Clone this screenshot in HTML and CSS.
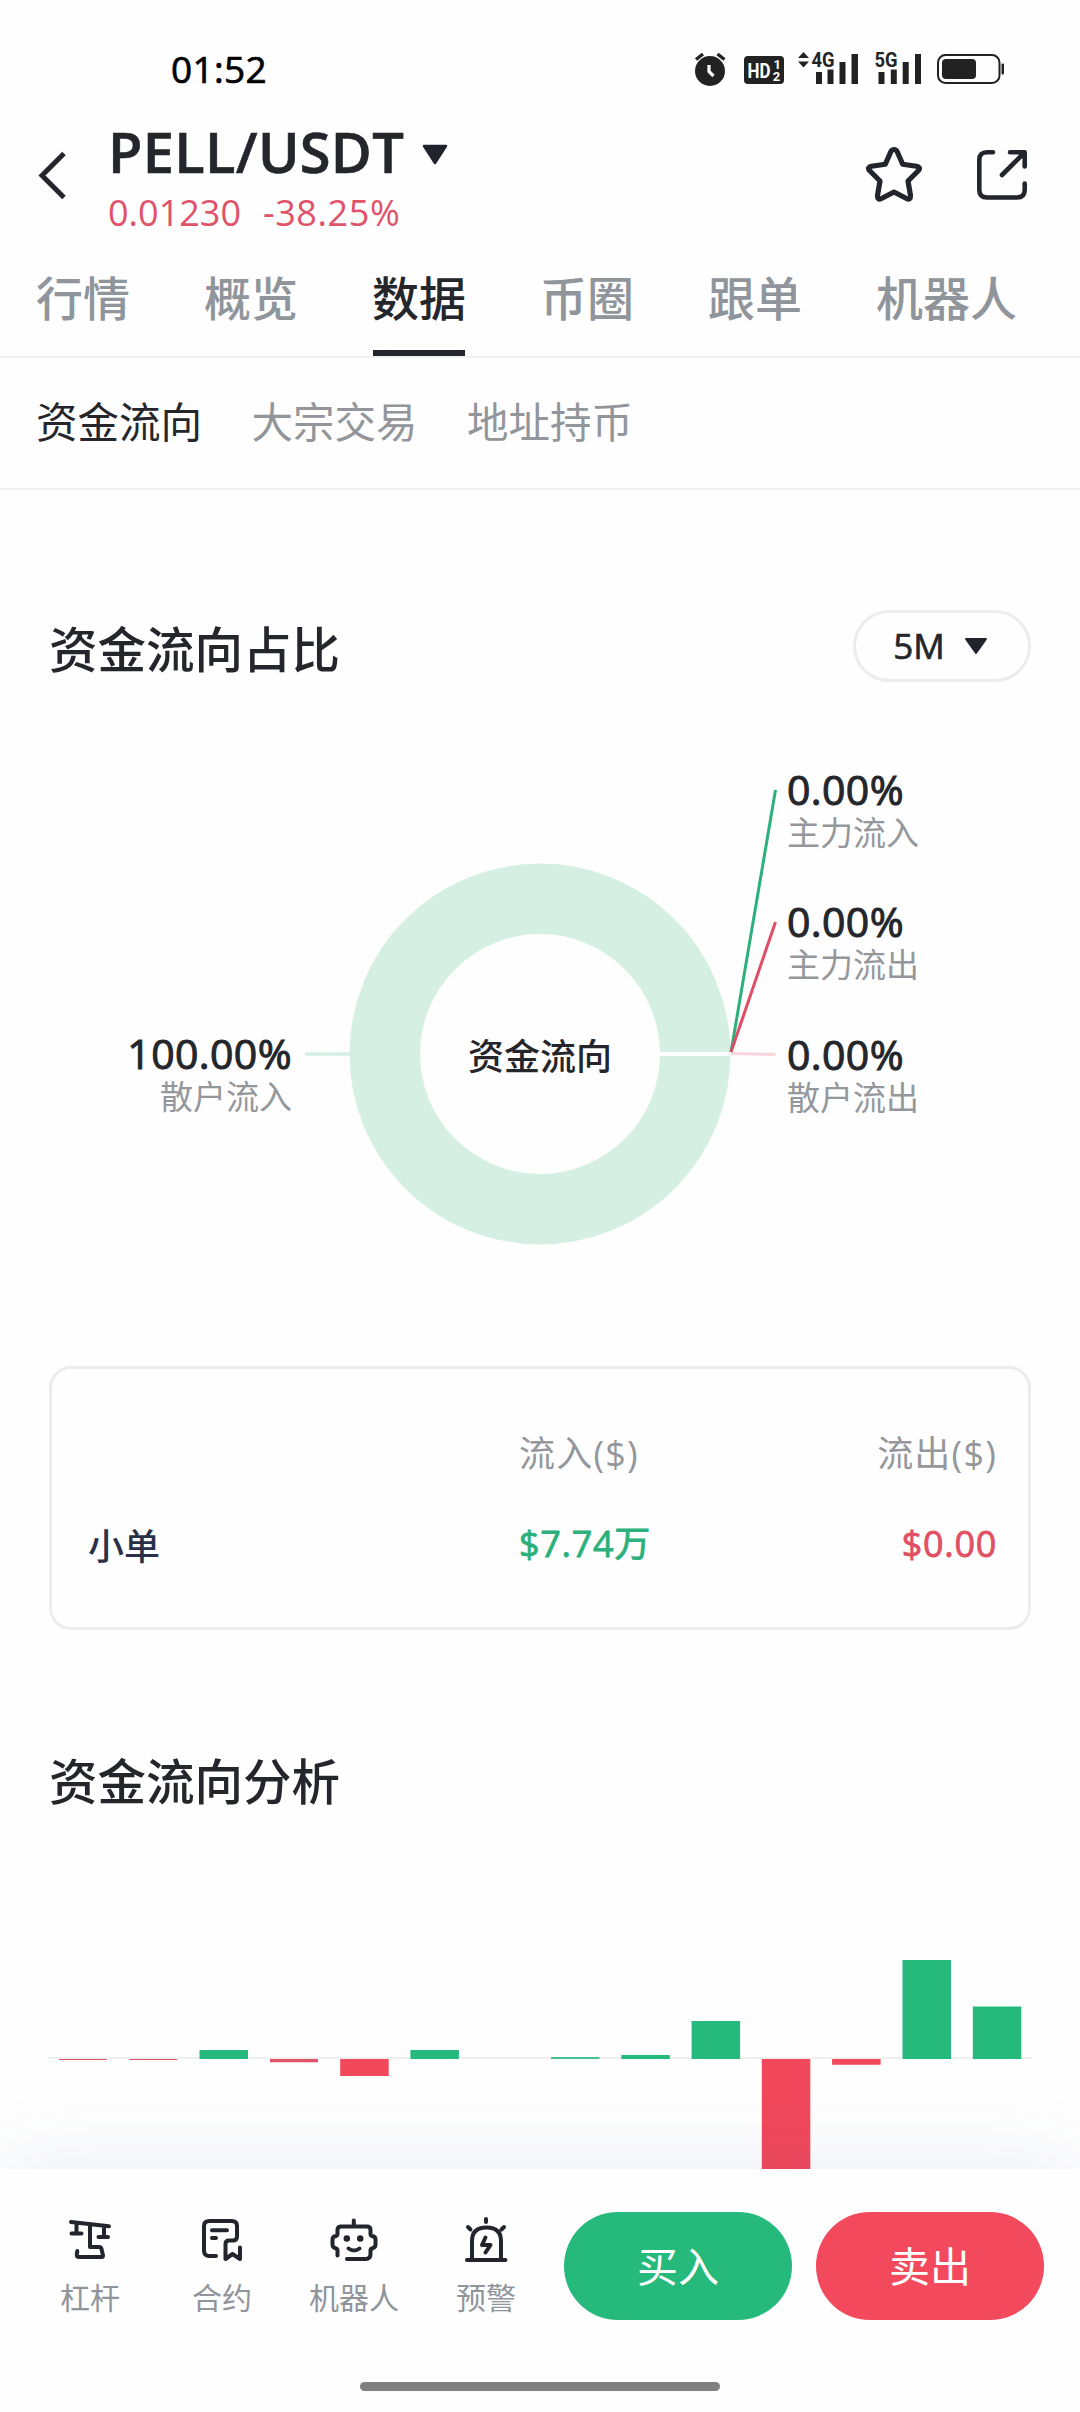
FILE: index.html
```html
<!DOCTYPE html>
<html lang="zh-CN">
<head>
<meta charset="utf-8">
<title>PELL/USDT</title>
<link rel="stylesheet" href="styles.css">
</head>
<body>
<div class="screen">
  <div class="status">
    <span class="clock">01:52</span>
    <svg class="status-icons" width="312" height="52" viewBox="694 43 312 52">
      <g fill="#222">
        <circle cx="710" cy="71" r="15"/>
        <path d="M696 59.500L703 54M724.500 59.500L717.500 54" stroke="#222" stroke-width="3.400" fill="none"/>
        <path d="M709 65v6.500l4.500 4.500" stroke="#fff" stroke-width="3.200" fill="none"/>
        <rect x="744" y="56" width="40" height="28" rx="4"/>
        <path d="M803.500 52l5.500 6h-11zM803.500 67.500l5.500-6h-11z"/>
        <path d="M816 72h6v12h-6zM827.500 69.500h6v14.500h-6zM839.500 62h6v22h-6zM851.500 54h6.500v30h-6.500z"/>
        <path d="M878.500 72h6v12h-6zM890.800 69.500h6v14.500h-6zM902.700 62h6v22h-6zM915 54h6v30h-6z"/>
        <rect x="942" y="59" width="34" height="20" rx="4"/>
        <rect x="1001.500" y="63.500" width="2.500" height="11" rx="1"/>
      </g>
      <rect x="938" y="55" width="61.500" height="28" rx="7.500" fill="none" stroke="#222" stroke-width="2"/>
      <text class="badge-hd" x="747.500" y="78" textLength="23" lengthAdjust="spacingAndGlyphs">HD</text>
      <text class="badge-num" x="773.500" y="69">1</text>
      <text class="badge-num" x="772.800" y="80.500">2</text>
      <text class="badge-net" x="811.500" y="67" textLength="23" lengthAdjust="spacingAndGlyphs">4G</text>
      <text class="badge-net" x="874.500" y="67" textLength="23" lengthAdjust="spacingAndGlyphs">5G</text>
    </svg>
  </div>

  <header class="header">
    <svg class="back" width="30" height="50" viewBox="0 0 30 50"><path d="M27 2.500L5 24.500 27 46.500" fill="none" stroke="#24262b" stroke-width="5"/></svg>
    <div class="pair">
      <div class="pair-name"><span>PELL/USDT</span><svg width="26" height="21" viewBox="0 0 26 21"><path d="M2 2h22L13 19z" fill="#20232c" stroke="#20232c" stroke-width="2.500" stroke-linejoin="round"/></svg></div>
      <div class="pair-price"><span>0.01230</span><span class="change">-38.25%</span></div>
    </div>
    <svg class="star" width="60" height="60" viewBox="0 0 60 60"><path d="M30 5.500q2.200 0 3.100 2L38.700 20.200 52.500 22.200Q57.500 23.500 54 27L44 37 46.500 51.500Q46.700 56.500 42.500 54.500L30 48 17.500 54.500Q13.300 56.500 13.500 51.500L16 37 6 27Q2.500 23.500 7.500 22.200L21.300 20.200 26.900 7.500q.9-2 3.100-2z" fill="none" stroke="#22252c" stroke-width="5.200" stroke-linejoin="round"/></svg>
    <svg class="share" width="54" height="54" viewBox="0 0 54 54"><g fill="none" stroke="#22252c" stroke-width="4.600" stroke-linecap="round" stroke-linejoin="round"><path d="M18 4.300H12Q4.300 4.300 4.300 12V42Q4.300 49.500 12 49.500H42Q49.700 49.500 49.700 42V35.500"/><path d="M35 4.300H49.700V18.500M48.500 5.500L27 27"/></g></svg>
  </header>

  <nav class="tabs">
    <span class="tab">行情</span><span class="tab">概览</span><span class="tab tab-active">数据</span><span class="tab">币圈</span><span class="tab">跟单</span><span class="tab">机器人</span>
  </nav>
  <nav class="subtabs">
    <span class="subtab subtab-active">资金流向</span><span class="subtab">大宗交易</span><span class="subtab">地址持币</span>
  </nav>

  <main class="content">
    <div class="section-head">
      <h2>资金流向占比</h2>
      <div class="period">5M<svg width="24" height="18" viewBox="0 0 24 18"><path d="M2 2h20L12 16z" fill="#20232c" stroke="#20232c" stroke-width="2" stroke-linejoin="round"/></svg></div>
    </div>

    <div class="flow">
      <div class="flow-left">
        <div class="share-item"><b>100.00%</b><span>散户流入</span></div>
      </div>
      <svg class="donut" width="473" height="500" viewBox="305 760 473 500">
        <circle cx="540" cy="1054" r="155.200" fill="none" stroke="#d5f0e2" stroke-width="70.500"/>
        <path d="M660 1054H731" stroke="#fff" stroke-width="4"/>
        <path d="M305 1054H350" stroke="#d5f0e2" stroke-width="3.500"/>
        <path d="M731 1053.500L775.500 1054.500" stroke="#fad5dc" stroke-width="3"/>
        <path d="M731 1052L775.500 790" stroke="#2db07d" stroke-width="3"/>
        <path d="M731 1052L775.500 922" stroke="#e04d66" stroke-width="3"/>
        <text class="donut-label" x="540" y="1070" text-anchor="middle">资金流向</text>
      </svg>
      <div class="flow-right">
        <div class="share-item"><b>0.00%</b><span>主力流入</span></div>
        <div class="share-item"><b>0.00%</b><span>主力流出</span></div>
        <div class="share-item"><b>0.00%</b><span>散户流出</span></div>
      </div>
    </div>

    <div class="card">
      <span></span><span class="th">流入($)</span><span class="th right">流出($)</span>
      <span class="row-name">小单</span><span class="up">$7.74万</span><span class="down right">$0.00</span>
    </div>

    <h2 class="analysis">资金流向分析</h2>
    <svg class="bars" width="984" height="358" viewBox="48 1811 984 358">
      <path d="M48 2058H1032" stroke="#f0f0f1" stroke-width="2"/>
      <g fill="#25ba7b">
        <path d="M199.500 2050h48.500v9h-48.500zM410.400 2050h48.500v9h-48.500zM621.300 2055h48.500v4h-48.500zM691.600 2021h48.500v38h-48.500zM902.500 1960h48.500v99h-48.500zM972.800 2006.500h48.500v52.500h-48.500z"/>
        <path d="M551 2057h48.500v2h-48.500z" opacity=".85"/>
      </g>
      <g fill="#e0526a">
        <path d="M59 2059h48v1h-48zM129.200 2059h48v1h-48z"/>
        <path d="M270 2059h48v3.300h-48z"/>
      </g>
      <path fill="#f1485b" d="M340.200 2059h48.500v17h-48.500zM761.800 2059h48.500v110h-48.500zM832.100 2059h48.500v5.700h-48.500z"/>
    </svg>
  </main>

  <footer class="bottom">
    <div class="actions">
      <div class="nav-item">
        <svg width="48" height="48" viewBox="66 2216 48 48"><path d="M71 2222L109 2226.200M76.500 2224V2233M71.500 2233.500H81.500M104 2227V2237M98.500 2237H108M90 2225V2247H99.500Q101 2247 101.500 2249L103 2255.500Q103 2257 101.500 2257H79Q76.500 2257 76.800 2254.500L77.300 2251"/></svg>
        <span>杠杆</span>
      </div>
      <div class="nav-item">
        <svg width="48" height="48" viewBox="198 2216 48 48"><path d="M216 2256H209.500Q204 2256 204 2250.500V2226Q204 2221 209.500 2221H231.500Q237 2221 237 2226V2236.500Q237 2240.500 233 2240.500H229Q225.500 2240.500 225.500 2244V2259L232.500 2254 240 2259V2247.500M212 2230.200H227M212 2238H216"/></svg>
        <span>合约</span>
      </div>
      <div class="nav-item">
        <svg width="48" height="48" viewBox="330 2216 48 48"><path d="M337.500 2255.500V2250.500Q337.500 2249 336 2248.500Q332.500 2247.500 332.500 2244.500V2239.500Q332.500 2236.500 336 2236Q337.500 2235.500 337.500 2234V2230Q337.500 2226.500 341 2226.500H367Q370.500 2226.500 370.500 2230V2234Q370.500 2235.500 372 2236Q375.500 2236.500 375.500 2239.500V2244.500Q375.500 2247.500 372 2248.500Q370.500 2249 370.500 2250.500V2254Q370.500 2259 365.500 2259H347M353.800 2226V2220.500M348.500 2248.500Q354 2252.500 359.500 2248.500"/><path class="solid" d="M346.800 2238.500h.01M360.200 2238.500h.01"/></svg>
        <span>机器人</span>
      </div>
      <div class="nav-item">
        <svg width="48" height="48" viewBox="462 2216 48 48"><path d="M467 2260H505.500M472 2260V2241Q472 2227.500 486.500 2227.500T501 2241V2260M486 2219V2222M468 2227L470.500 2229.500M504 2227L501.500 2229.500M485.500 2237.500L482 2245H490.500L485.500 2252.500"/></svg>
        <span>预警</span>
      </div>
      <div class="trade buy">买入</div>
      <div class="trade sell">卖出</div>
    </div>
    <div class="home-bar"></div>
  </footer>
</div>
</body>
</html>
```
FILE: styles.css
```css
* { box-sizing: border-box; }
body {
  margin: 0;
  background: #fefefe;
  font-family: "Open Sans", "Noto Sans CJK SC", sans-serif;
  color: #24262b;
}
svg { display: block; flex: none; }
.screen {
  width: 1080px;
  height: 2412px;
  display: flex;
  flex-direction: column;
  overflow: hidden;
}
.status {
  height: 110px;
  padding: 28px 74px 0 171px;
  display: flex;
  align-items: center;
  justify-content: space-between;
  flex: none;
}
.clock {
  font-size: 37px;
  line-height: 44px;
  letter-spacing: .3px;
  color: #000;
  -webkit-text-stroke: .7px #000;
}
.badge-hd { font: 700 21px "Roboto", sans-serif; fill: #fff; }
.badge-num { font: 700 13px "Roboto", sans-serif; fill: #fff; }
.badge-net { font: 700 20px "Roboto", sans-serif; fill: #222; }

.header {
  height: 140px;
  padding: 0 51px 8px 37px;
  display: flex;
  align-items: center;
  flex: none;
}
.pair { margin-left: 41px; flex: 1; }
.pair-name {
  display: flex;
  align-items: center;
  font-size: 56px;
  line-height: 64px;
  font-weight: 600;
  gap: 18px;
}
.pair-name span { width: 296px; letter-spacing: .3px; -webkit-text-stroke: .6px #24262b; }
.pair-name svg { margin-top: 7px; }
.pair-price {
  display: flex;
  gap: 22px;
  margin-top: 10px;
  font-size: 36px;
  line-height: 40px;
  color: #e0526a;
}
.change { letter-spacing: .6px; }
.star { margin: -4px 51px 0 0; }
.share { margin-top: -2px; }

.tabs {
  height: 108px;
  padding: 20px 0 0 36px;
  display: flex;
  gap: 74px;
  border-bottom: 2px solid #f0f0f1;
  flex: none;
}
.tab {
  font-size: 47px;
  line-height: 56px;
  font-weight: 500;
  color: #8f959b;
}
.tab-active {
  color: #24262b;
  display: flex;
  flex-direction: column;
  align-items: center;
  justify-content: space-between;
}
.tab-active::after { content: ""; width: 92px; height: 6px; background: #22252c; }
.subtabs {
  height: 132px;
  padding: 0 0 2px 36px;
  display: flex;
  align-items: center;
  gap: 49.500px;
  border-bottom: 2px solid #eeeeef;
  flex: none;
}
.subtab { font-size: 41.500px; line-height: 50px; color: #92969a; }
.subtab-active { color: #24262b; }

.content { flex: 1; min-height: 0; overflow: hidden; padding: 120px 49px 0; }
h2 { margin: 0; font-size: 48.500px; line-height: 60px; font-weight: 500; color: #24262b; }
.section-head { height: 72px; display: flex; align-items: center; justify-content: space-between; }
.section-head h2 { padding-top: 5px; }
.period {
  width: 178px;
  height: 72px;
  border: 3px solid #ebecec;
  border-radius: 36px;
  display: flex;
  align-items: center;
  justify-content: center;
  gap: 19px;
  padding-right: 3px;
  font-size: 35px;
  line-height: 44px;
  -webkit-text-stroke: .7px #24262b;
}
.flow { display: flex; margin-top: 78px; height: 500px; }
.flow-left { width: 243px; margin-right: 13px; padding-top: 268px; text-align: right; }
.flow-right { margin-left: 9px; padding-top: 3.500px; display: flex; flex-direction: column; gap: 46.500px; }
.share-item { display: flex; flex-direction: column; }
.share-item b {
  font-size: 41px;
  line-height: 50px;
  font-weight: 400;
  letter-spacing: .4px;
  -webkit-text-stroke: 1px #24262b;
}
.share-item span { margin-top: 1px; font-size: 33px; line-height: 35px; color: #94979b; }
.donut-label { font: 500 36px "Noto Sans CJK SC", sans-serif; fill: #24262b; }

.card {
  margin-top: 106px;
  height: 264px;
  border: 3px solid #ebecec;
  border-radius: 22px;
  padding: 63px 31px 0 36px;
  display: grid;
  grid-template-columns: 431px 1fr 1fr;
  grid-auto-rows: 44px;
  row-gap: 48px;
  font-size: 36px;
  line-height: 44px;
}
.right { text-align: right; }
.th { color: #94979b; letter-spacing: 1.200px; }
.row-name { padding-top: 1px; color: #2b3049; font-weight: 500; }
.up, .down { margin-top: -2px; letter-spacing: .7px; -webkit-text-stroke: .8px currentColor; }
.up { color: #2bb07b; }
.down { color: #e04f62; }
.analysis { margin-top: 121px; }
.bars { margin-left: -1px; }

.bottom {
  position: relative;
  height: 243px;
  flex: none;
  background: #fefefe;
  padding: 43px 36px 0 24px;
  box-shadow: 0 0 80px rgba(70, 90, 150, .1);
}
.actions { display: flex; height: 108px; }
.nav-item { width: 132px; padding-top: 4px; display: flex; flex-direction: column; align-items: center; }
.nav-item svg { fill: none; stroke: #22252c; stroke-width: 4; stroke-linecap: round; stroke-linejoin: round; }
.nav-item .solid { stroke-width: 6.500; }
.nav-item span { margin-top: 16px; font-size: 30px; line-height: 36px; color: #8f959b; }
.trade {
  width: 228px;
  height: 108px;
  border-radius: 54px;
  color: #fff;
  font-size: 41px;
  line-height: 109px;
  text-align: center;
}
.buy { margin: 0 24px 0 12px; background: #25ba7b; }
.sell { background: #f3495d; }
.home-bar { width: 360px; height: 9px; margin: 62px 0 0 336px; border-radius: 5px; background: #808080; }
```
